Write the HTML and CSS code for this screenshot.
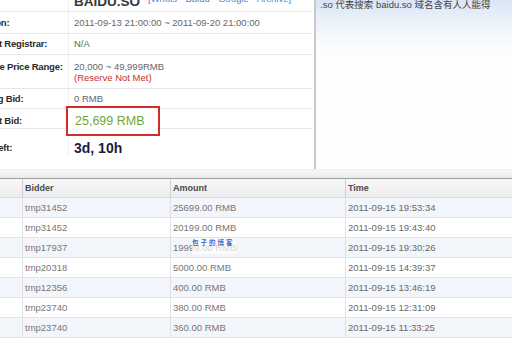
FILE: index.html
```html
<!DOCTYPE html>
<html>
<head>
<meta charset="utf-8">
<link rel="stylesheet" href="styles.css">
</head>
<body>
<div class="page">
  <div class="top">
    <div class="info">
      <div class="row r-title">
        <div class="label"></div>
        <div class="value title-cell"><span class="domain">BAIDU.SO</span><a class="tools">[Whois · Baidu · Google · Archive]</a></div>
      </div>
      <div class="row r-date">
        <div class="label">Duration:</div>
        <div class="value">2011-09-13 21:00:00 ~ 2011-09-20 21:00:00</div>
      </div>
      <div class="row r-reg">
        <div class="label">Current Registrar:</div>
        <div class="value">N/A</div>
      </div>
      <div class="row r-range">
        <div class="label">Reserve Price Range:</div>
        <div class="value">20,000 ~ 49,999RMB<br><span class="notmet">(Reserve Not Met)</span></div>
      </div>
      <div class="row r-start">
        <div class="label">Starting Bid:</div>
        <div class="value">0 RMB</div>
      </div>
      <div class="row r-cur">
        <div class="label">Current Bid:</div>
        <div class="value"><div class="current">25,699 RMB</div></div>
      </div>
      <div class="row r-left">
        <div class="label">Time Left:</div>
        <div class="value"><span class="timeleft">3d, 10h</span></div>
      </div>
    </div>
    <div class="divider"></div>
    <div class="promo">.so 代表搜索 baidu.so 域名含有人人能得</div>
  </div>
  <div class="band"></div>
  <div class="bids">
    <div class="brow head"><div class="c"></div><div class="c">Bidder</div><div class="c">Amount</div><div class="c">Time</div></div>
    <div class="brow odd"><div class="c"></div><div class="c">tmp31452</div><div class="c">25699.00 RMB</div><div class="c t">2011-09-15 19:53:34</div></div>
    <div class="brow"><div class="c"></div><div class="c">tmp31452</div><div class="c">20199.00 RMB</div><div class="c t">2011-09-15 19:43:40</div></div>
    <div class="brow odd"><div class="c"></div><div class="c">tmp17937</div><div class="c amt">19999.00 RMB<span class="wm">包子的博客</span></div><div class="c t">2011-09-15 19:30:26</div></div>
    <div class="brow"><div class="c"></div><div class="c">tmp20318</div><div class="c">5000.00 RMB</div><div class="c t">2011-09-15 14:39:37</div></div>
    <div class="brow odd"><div class="c"></div><div class="c">tmp12356</div><div class="c">400.00 RMB</div><div class="c t">2011-09-15 13:46:19</div></div>
    <div class="brow"><div class="c"></div><div class="c">tmp23740</div><div class="c">380.00 RMB</div><div class="c t">2011-09-15 12:31:09</div></div>
    <div class="brow odd"><div class="c"></div><div class="c">tmp23740</div><div class="c">360.00 RMB</div><div class="c t">2011-09-15 11:33:25</div></div>
  </div>
</div>
</body>
</html>
```
FILE: styles.css
```css
html, body {
  margin: 0;
  padding: 0;
  background: #fff;
  overflow: hidden;
}
.page {
  width: 512px;
  height: 340px;
  overflow: hidden;
  font-family: "Liberation Sans", Arial, sans-serif;
  font-size: 9.5px;
  color: #666;
}
.top {
  display: flex;
  height: 169px;
}
.info {
  width: 312px;
  flex: none;
}
.row {
  display: grid;
  grid-template-columns: 68px 1fr;
  border-bottom: 1px solid #e6e6e6;
  line-height: 12px;
}
.label {
  overflow: hidden;
  white-space: nowrap;
  text-indent: -31px;
  font-weight: bold;
  letter-spacing: -0.2px;
  color: #2a2a2a;
}
.value {
  border-left: 1px solid #f0f0f0;
  padding-left: 5px;
  white-space: nowrap;
}
.r-title {
  height: 30px;
  margin-top: -19px;
}
.title-cell {
  display: flex;
  align-items: flex-end;
  gap: 8px;
}
.domain {
  font-size: 13.5px;
  line-height: 13px;
  font-weight: bold;
  color: #3a3a3a;
  padding-bottom: 3px;
}
.tools {
  font-size: 9.5px;
  line-height: 11px;
  color: #5a86c4;
  padding-bottom: 7px;
}
.r-date > div { padding-top: 5px; padding-bottom: 4px; }
.r-reg > div { padding-top: 4px; padding-bottom: 4px; }
.r-range { line-height: 11px; }
.r-range > div { padding-top: 6px; padding-bottom: 5px; }
.notmet { color: #c83030; }
.r-start > div { padding-top: 4px; padding-bottom: 3px; }
.r-cur .label { padding-top: 6px; padding-bottom: 1px; }
.r-cur .value { padding-left: 0; }
.current {
  box-sizing: border-box;
  height: 30px;
  width: 94px;
  margin: -3px 0 -8px -3px;
  border: 2px solid #d42b2b;
  background: #fff;
  padding: 6px 0 0 7px;
  font-size: 12.5px;
  line-height: 15px;
  color: #6ea834;
  position: relative;
}
.r-left {
  border-bottom: none;
}
.r-left .label { padding-top: 13px; }
.r-left .value { padding-top: 12px; }
.timeleft {
  font-size: 14px;
  line-height: 14px;
  font-weight: bold;
  color: #1c1c3c;
}
.divider {
  width: 2px;
  margin-left: 2px;
  background: #c9c9c9;
  flex: none;
}
.promo {
  flex: 1;
  padding-left: 4px;
  font-size: 9.5px;
  line-height: 10px;
  color: #444;
  font-family: "Liberation Sans", "Noto Sans CJK SC", sans-serif;
  background: linear-gradient(180deg, #d9e5f6 0px, #eef3fb 25px, #fdfdfd 50px, #fdfdfd 100%);
}
.band {
  height: 9px;
  background: linear-gradient(180deg, #f7f7f7, #ebebeb);
  border-top: 1px solid #ececec;
  box-sizing: border-box;
}
.brow {
  display: grid;
  grid-template-columns: 22px 148px 175px 1fr;
  height: 20px;
  box-sizing: border-box;
  border-bottom: 1px solid #e3e3e3;
  color: #777;
  line-height: 19px;
}
.brow.odd { background: #f2f5f9; }
.brow .c {
  padding-left: 2px;
  white-space: nowrap;
}
.brow .c + .c { border-left: 1px solid #e1e1e1; }
.brow .t { color: #6a6a6a; }
.brow.head {
  border-top: 1px solid #9c9c9c;
  border-bottom: 1px solid #dcdcdc;
  background: linear-gradient(180deg, #f8f8f8, #ececec);
  font-size: 9px;
  font-weight: bold;
  color: #4a4a4a;
  line-height: 19px;
}
.brow.head .c + .c { border-left: 1px solid #d0d0d0; }
.amt { position: relative; }
.wm {
  position: absolute;
  left: 21px;
  top: 0;
  width: 44px;
  height: 16px;
  font-size: 6.5px;
  line-height: 8px;
  letter-spacing: 2px;
  color: #3c6fd0;
  background: rgba(255, 255, 255, 0.7);
  font-family: "Noto Sans CJK SC", sans-serif;
  font-weight: bold;
}
```
